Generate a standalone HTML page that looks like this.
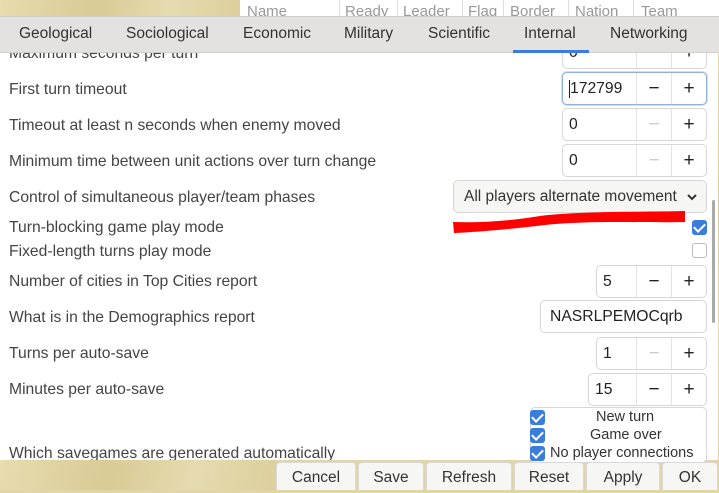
<!DOCTYPE html>
<html><head><meta charset="utf-8"><style>
*{box-sizing:border-box;margin:0;padding:0}
body{width:719px;height:490px;overflow:hidden;position:relative;font-family:"Liberation Sans","DejaVu Sans",sans-serif;background:#e2d6a8;color:#333}
.parch{position:absolute;background:linear-gradient(100deg,#e8dcb0,#d9cb95 40%,#e6dbb0 70%,#dccf9c)}
.abs{position:absolute}
.lbl{position:absolute;left:9px;font-size:15.7px;color:#444}
.spin{position:absolute;height:33px;border:1px solid #d6d6d6;border-radius:5px;background:#fff;font-size:15.7px;color:#222}
.spin .v{position:absolute;left:6px;top:7px}
.spin .m,.spin .p{position:absolute;top:0;width:35px;height:31px;border-left:1px solid #e3e3e3;text-align:center;line-height:31px;font-size:19px}
.spin .p{right:0}.spin .m{right:35px}
.dis{color:#ccc}
.cb{position:absolute;width:15px;height:15px;border-radius:3px}
.on{background:#3b7ddd}
.on::after{content:"";position:absolute;left:4px;top:1px;width:5px;height:9px;border:solid #fff;border-width:0 2.5px 2.5px 0;transform:rotate(45deg)}
.off{border:1px solid #bbb;background:#fff}
.btn{position:absolute;top:462px;height:28px;background:#f6f6f5;border:1px solid #d9d9d9;border-bottom:none;border-radius:4px 4px 0 0;font-size:15.5px;text-align:center;line-height:30px;color:#333}
.tab{position:absolute;top:25px;font-size:15.5px;color:#333}
.th{position:absolute;top:3px;font-size:15px;color:#999}
</style></head><body>
<div class="parch" style="left:0;top:0;width:240px;height:20px"></div>
<div class="parch" style="left:0;top:460px;width:276px;height:30px"></div>
<div class="parch" style="left:718px;top:0;width:1px;height:490px"></div>
<div class="abs" style="left:240px;top:0;width:479px;height:20px;background:#fff"></div>
<div class="th" style="left:247px">Name</div>
<div class="abs" style="left:339px;top:0;width:1px;height:18px;background:#ddd"></div>
<div class="th" style="left:345px">Ready</div>
<div class="abs" style="left:397px;top:0;width:1px;height:18px;background:#ddd"></div>
<div class="th" style="left:403px">Leader</div>
<div class="abs" style="left:462px;top:0;width:1px;height:18px;background:#ddd"></div>
<div class="th" style="left:468px">Flag</div>
<div class="abs" style="left:503px;top:0;width:1px;height:18px;background:#ddd"></div>
<div class="th" style="left:510px">Border</div>
<div class="abs" style="left:568px;top:0;width:1px;height:18px;background:#ddd"></div>
<div class="th" style="left:575px">Nation</div>
<div class="abs" style="left:633px;top:0;width:1px;height:18px;background:#ddd"></div>
<div class="th" style="left:641px">Team</div>
<div class="abs" style="left:0;top:52px;width:718px;height:408px;background:#fff"></div>
<div class="abs" style="left:0;top:16px;width:719px;height:37px;background:#e3e2e0;border-top:1px solid #cfcfcd;border-bottom:1px solid #cfcfcd"></div>
<div class="tab" style="left:19px">Geological</div>
<div class="tab" style="left:126px">Sociological</div>
<div class="tab" style="left:243px">Economic</div>
<div class="tab" style="left:344px">Military</div>
<div class="tab" style="left:428px">Scientific</div>
<div class="tab" style="left:524px">Internal</div>
<div class="tab" style="left:610px">Networking</div>
<div class="abs" style="left:513px;top:50px;width:76px;height:3px;background:#3b7ddd"></div>
<div class="lbl" style="top:45px;clip-path:inset(8px 0 0 0)">Maximum seconds per turn</div>
<div class="spin" style="left:562px;top:36px;width:145px;clip-path:inset(17px 0 0 0)"><span class="v">0</span><span class="m dis">−</span><span class="p">+</span></div>
<div class="lbl" style="top:81px">First turn timeout</div>
<div class="spin" style="left:562px;top:72px;width:145px;border-color:#8fb1de;box-shadow:0 0 0 1px #cfe0f5"><span class="v" style="border-left:1px solid #222;padding-left:0">172799</span><span class="m">−</span><span class="p">+</span></div>
<div class="lbl" style="top:117px">Timeout at least n seconds when enemy moved</div>
<div class="spin" style="left:562px;top:108px;width:145px"><span class="v">0</span><span class="m dis">−</span><span class="p">+</span></div>
<div class="lbl" style="top:153px">Minimum time between unit actions over turn change</div>
<div class="spin" style="left:562px;top:144px;width:145px"><span class="v">0</span><span class="m dis">−</span><span class="p">+</span></div>
<div class="lbl" style="top:189px">Control of simultaneous player/team phases</div>
<div class="abs" style="left:453px;top:180px;width:254px;height:33px;border:1px solid #d6d6d6;border-radius:5px;background:#f6f6f5;font-size:15.5px;color:#333;padding:7px 0 0 10px">All players alternate movement</div>
<svg class="abs" style="left:686px;top:192px" width="12" height="10"><path d="M2 3 L6 7 L10 3" stroke="#333" stroke-width="2" fill="none"/></svg>
<svg class="abs" style="left:450px;top:205px" width="240" height="30"><path d="M3 17 C30 18 60 16 90 11 C130 6 200 7 235 6 L235 17 C200 18 140 15 95 20 C60 24 30 27 4 28 Z" fill="#f00"/></svg>
<div class="lbl" style="top:219px">Turn-blocking game play mode</div>
<div class="cb on" style="left:692px;top:220px"></div>
<div class="lbl" style="top:243px">Fixed-length turns play mode</div>
<div class="cb off" style="left:692px;top:243px"></div>
<div class="lbl" style="top:273px">Number of cities in Top Cities report</div>
<div class="spin" style="left:596px;top:265px;width:111px"><span class="v">5</span><span class="m">−</span><span class="p">+</span></div>
<div class="lbl" style="top:309px">What is in the Demographics report</div>
<div class="spin" style="left:540px;top:300px;width:167px"><span class="v" style="left:9px">NASRLPEMOCqrb</span></div>
<div class="lbl" style="top:345px">Turns per auto-save</div>
<div class="spin" style="left:596px;top:337px;width:111px"><span class="v">1</span><span class="m dis">−</span><span class="p">+</span></div>
<div class="lbl" style="top:381px">Minutes per auto-save</div>
<div class="spin" style="left:588px;top:373px;width:119px"><span class="v">15</span><span class="m">−</span><span class="p">+</span></div>
<div class="lbl" style="top:445px;height:15px;overflow:hidden">Which savegames are generated automatically</div>
<div class="abs" style="left:530px;top:407px;width:177px;height:56px;border:1px solid #d6d6d6;border-radius:5px;background:#fff"></div>
<div class="cb on" style="left:530px;top:410px"></div>
<div class="abs" style="left:596px;top:409px;font-size:14.5px">New turn</div>
<div class="cb on" style="left:530px;top:428px"></div>
<div class="abs" style="left:590px;top:427px;font-size:14.5px">Game over</div>
<div class="cb on" style="left:530px;top:446px"></div>
<div class="abs" style="left:550px;top:445px;font-size:14.5px">No player connections</div>
<div class="abs" style="left:712px;top:200px;width:3px;height:123px;background:#aaa;border-radius:2px"></div>
<div class="btn" style="left:276px;width:80px">Cancel</div>
<div class="btn" style="left:358px;width:66px">Save</div>
<div class="btn" style="left:426px;width:86px">Refresh</div>
<div class="btn" style="left:514px;width:70px">Reset</div>
<div class="btn" style="left:586px;width:74px">Apply</div>
<div class="btn" style="left:662px;width:56px">OK</div>
</body></html>
